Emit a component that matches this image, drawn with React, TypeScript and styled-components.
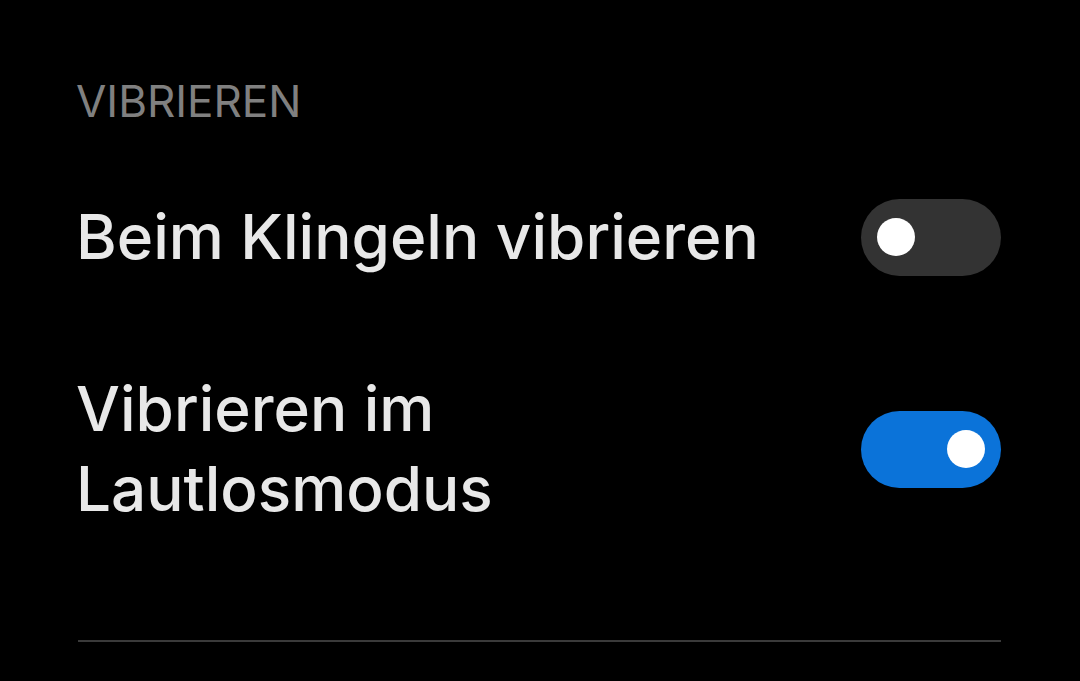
import styled, { createGlobalStyle } from "styled-components";

const Global = createGlobalStyle`
  html, body {
    margin: 0;
    padding: 0;
    background: #000;
  }
  body {
    font-family: Inter, "Noto Sans", sans-serif;
    -webkit-font-smoothing: antialiased;
  }
`;

const Page = styled.div`
  width: 1080px;
  height: 681px;
  overflow: hidden;
  background: #000;
  padding: 71px 79px 0 76px;
  box-sizing: border-box;
  display: flex;
  flex-direction: column;
`;

const SectionTitle = styled.div`
  font-size: 44px;
  line-height: 60px;
  color: #808080;
  font-weight: 400;
  margin-bottom: 20px;
`;

const Row = styled.div`
  display: flex;
  align-items: center;
  justify-content: space-between;
  padding: 46px 0;
`;

const Label = styled.div`
  flex: 1;
  font-size: 62px;
  line-height: 80px;
  font-weight: 500;
  color: #e8e8e8;
  white-space: nowrap;
`;

const Track = styled.div<{ $on: boolean }>`
  flex: none;
  width: 140px;
  height: 77px;
  border-radius: 39px;
  background: ${(p) => (p.$on ? "#0b73d9" : "#333333")};
  display: flex;
  align-items: center;
  justify-content: ${(p) => (p.$on ? "flex-end" : "flex-start")};
  padding: 0 16px;
  box-sizing: border-box;
`;

const Knob = styled.div`
  width: 38px;
  height: 38px;
  border-radius: 50%;
  background: #fff;
`;

const Divider = styled.div`
  height: 2px;
  background: #3a3a3a;
  margin-top: 65px;
  margin-left: 2px;
`;

function Switch({ on }: { on: boolean }) {
  return (
    <Track $on={on}>
      <Knob />
    </Track>
  );
}

export default function App() {
  return (
    <>
      <Global />
      <Page>
        <SectionTitle>VIBRIEREN</SectionTitle>
        <Row>
          <Label>Beim Klingeln vibrieren</Label>
          <Switch on={false} />
        </Row>
        <Row>
          <Label>
            Vibrieren im
            <br />
            Lautlosmodus
          </Label>
          <Switch on={true} />
        </Row>
        <Divider />
      </Page>
    </>
  );
}
